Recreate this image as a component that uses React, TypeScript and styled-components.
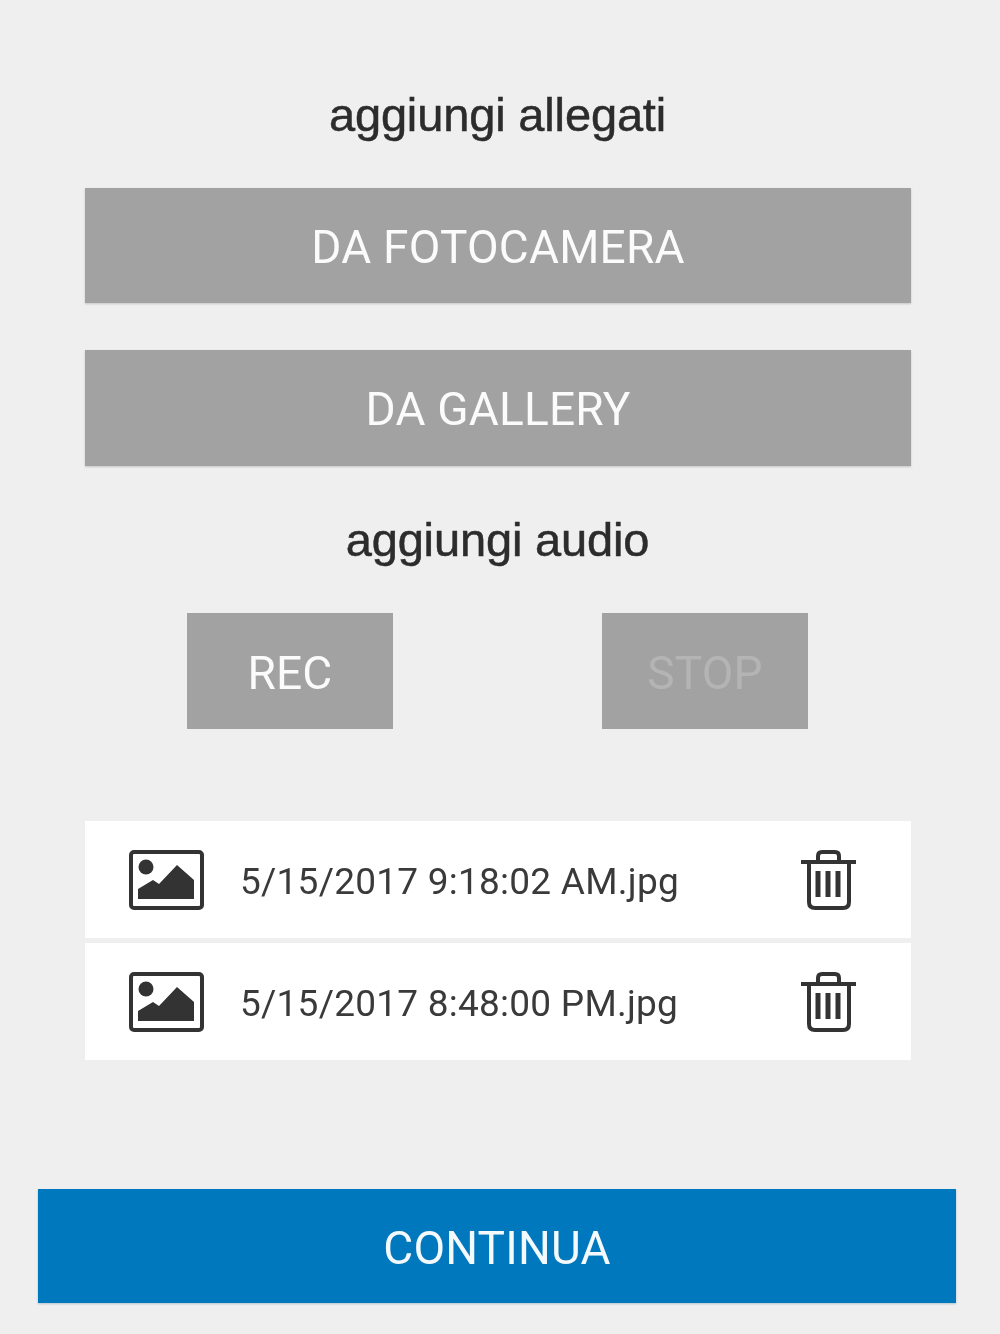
import React from 'react'
import styled, { createGlobalStyle } from 'styled-components'

const GlobalStyle = createGlobalStyle`
  html, body {
    margin: 0;
    padding: 0;
    background: #efefef;
  }
  * {
    box-sizing: border-box;
  }
`

const Page = styled.div`
  width: 1000px;
  height: 1334px;
  background: #efefef;
  display: flex;
  flex-direction: column;
  align-items: center;
  padding-top: 89px;
  overflow: hidden;
  filter: blur(0.5px);
`

const Heading = styled.h2`
  margin: 0 0 0 -5px;
  height: 52px;
  line-height: 52px;
  font-family: 'Liberation Sans', Arial, sans-serif;
  font-size: 47px;
  font-weight: 400;
  letter-spacing: -0.15px;
  color: #2c2c2c;
  -webkit-text-stroke: 0.5px #2c2c2c;
  text-align: center;
`

const Button = styled.button<{ $muted?: boolean }>`
  border: 0;
  padding: 4px 0 0;
  background: #a2a2a2;
  color: ${(p) => (p.$muted ? '#b4b4b4' : '#fbfbfb')};
  font-family: Roboto, sans-serif;
  font-size: 46px;
  font-weight: 400;
  letter-spacing: 0.2px;
  text-align: center;
`

const WideButton = styled(Button)<{ $height: number }>`
  width: 826px;
  height: ${(p) => p.$height}px;
  margin-left: -4px;
  padding-top: 2px;
  box-shadow: 0 1px 2px rgba(0, 0, 0, 0.18);
`

const ButtonStack = styled.div`
  display: flex;
  flex-direction: column;
  gap: 47px;
  margin-top: 47px;
`

const AudioHeading = styled(Heading)`
  margin-top: 48px;
`

const AudioButtons = styled.div`
  display: flex;
  gap: 209px;
  margin-top: 47px;
  margin-left: -5px;
`

const AudioButton = styled(Button)`
  width: 206px;
  height: 116px;
`

const FileList = styled.ul`
  list-style: none;
  margin: 92px 0 0 -4px;
  padding: 0;
  width: 826px;
  display: flex;
  flex-direction: column;
  gap: 5px;
`

const FileRow = styled.li`
  height: 117px;
  background: #fff;
  display: flex;
  align-items: center;
  padding: 0 54px 0 44px;
`

const FileName = styled.span`
  flex: 1;
  margin-left: 35px;
  padding-top: 4px;
  font-family: Roboto, sans-serif;
  font-size: 37px;
  letter-spacing: 0.25px;
  color: #3a3a3a;
  white-space: nowrap;
`

const ContinueButton = styled.button`
  border: 0;
  padding: 4px 0 0;
  width: 918px;
  height: 114px;
  margin-top: 129px;
  margin-left: -6px;
  background: #0078bd;
  color: #f4f9fc;
  font-family: Roboto, sans-serif;
  font-size: 46px;
  letter-spacing: 0.2px;
  box-shadow: 0 1px 2px rgba(0, 60, 100, 0.25);
`

const ImageIcon = () => (
  <svg width="76" height="60" viewBox="0 0 76 60" style={{ flex: 'none' }}>
    <rect x="2" y="2" width="71" height="56" rx="3" fill="none" stroke="#333" strokeWidth="4" />
    <circle cx="17" cy="17" r="7.5" fill="#333" />
    <path d="M9 49V39L24 30L30 34L48 15L65 30V49Z" fill="#333" />
  </svg>
)

const TrashIcon = () => (
  <svg width="56" height="60" viewBox="0 0 56 60" style={{ flex: 'none' }}>
    <path d="M0 12H55" stroke="#333" strokeWidth="4" />
    <path d="M8 12V52Q8 58 14 58H42Q48 58 48 52V12" fill="none" stroke="#333" strokeWidth="4" />
    <path d="M17 12V6Q17 2 21 2H34Q38 2 38 6V12" fill="none" stroke="#333" strokeWidth="4" />
    <path d="M17 21V47M27 21V47M37 21V47" stroke="#333" strokeWidth="5" />
  </svg>
)

const files = ['5/15/2017 9:18:02 AM.jpg', '5/15/2017 8:48:00 PM.jpg']

export default function App() {
  return (
    <Page>
      <GlobalStyle />
      <Heading>aggiungi allegati</Heading>
      <ButtonStack>
        <WideButton $height={115}>DA FOTOCAMERA</WideButton>
        <WideButton $height={116}>DA GALLERY</WideButton>
      </ButtonStack>
      <AudioHeading>aggiungi audio</AudioHeading>
      <AudioButtons>
        <AudioButton>REC</AudioButton>
        <AudioButton $muted>STOP</AudioButton>
      </AudioButtons>
      <FileList>
        {files.map((file) => (
          <FileRow key={file}>
            <ImageIcon />
            <FileName>{file}</FileName>
            <TrashIcon />
          </FileRow>
        ))}
      </FileList>
      <ContinueButton>CONTINUA</ContinueButton>
    </Page>
  )
}
